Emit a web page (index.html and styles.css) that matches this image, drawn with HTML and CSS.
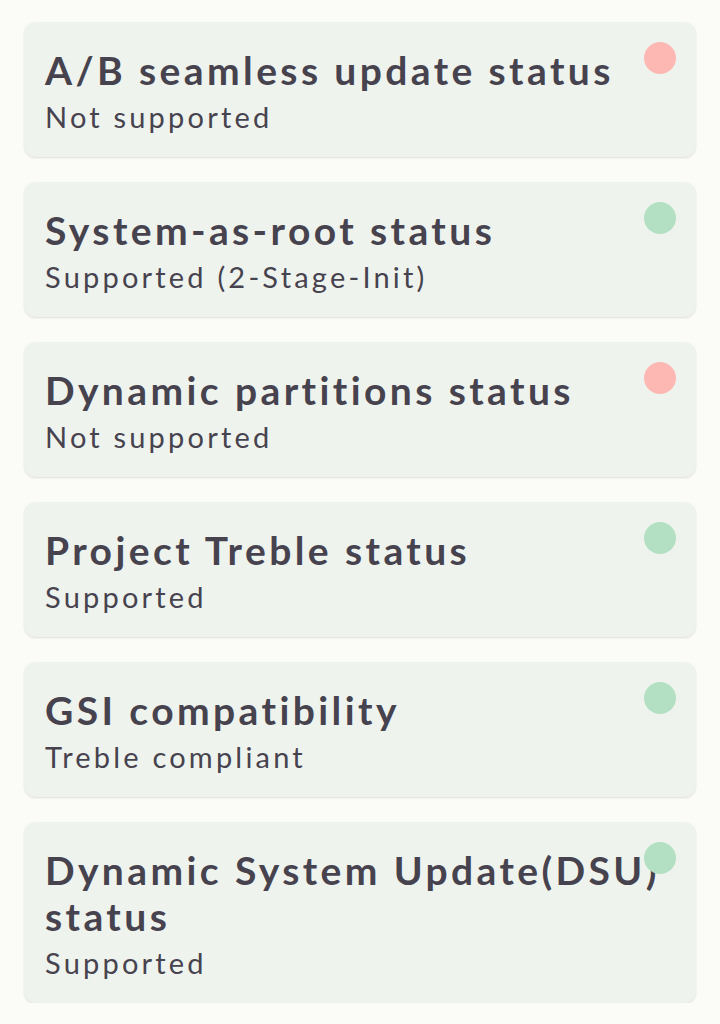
FILE: index.html
```html
<!DOCTYPE html>
<html>
<head>
<meta charset="utf-8">
<link rel="stylesheet" href="styles.css">
</head>
<body>
<main class="list">
  <section class="card">
    <h2 class="title">A/B seamless update status</h2>
    <p class="value">Not supported</p>
    <span class="dot dot-bad"></span>
  </section>
  <section class="card">
    <h2 class="title">System-as-root status</h2>
    <p class="value">Supported (2-Stage-Init)</p>
    <span class="dot dot-good"></span>
  </section>
  <section class="card">
    <h2 class="title">Dynamic partitions status</h2>
    <p class="value">Not supported</p>
    <span class="dot dot-bad"></span>
  </section>
  <section class="card">
    <h2 class="title">Project Treble status</h2>
    <p class="value">Supported</p>
    <span class="dot dot-good"></span>
  </section>
  <section class="card">
    <h2 class="title">GSI compatibility</h2>
    <p class="value">Treble compliant</p>
    <span class="dot dot-good"></span>
  </section>
  <section class="card">
    <h2 class="title">Dynamic System Update(DSU) status</h2>
    <p class="value">Supported</p>
    <span class="dot dot-good"></span>
  </section>
</main>
</body>
</html>
```

FILE: styles.css
```css
html, body {
  margin: 0;
  padding: 0;
  background: #fbfcf7;
}
body {
  font-family: Lato, "Noto Sans", sans-serif;
  color: #47434e;
}
.list {
  display: flex;
  flex-direction: column;
  gap: 25px;
  padding: 22px 24px 0 24px;
}
.card {
  position: relative;
  background: #eff3ee;
  border-radius: 12px;
  padding: 25px 21px 22px 21px;
  box-shadow: 0 1px 2px rgba(0, 0, 0, 0.12);
}
.title {
  margin: 0;
  font-size: 39px;
  line-height: 46px;
  font-weight: 700;
  letter-spacing: 3.4px;
}
.value {
  margin: 6px 0 0 0;
  font-size: 29px;
  line-height: 36px;
  font-weight: 400;
  letter-spacing: 3.2px;
}
.dot {
  position: absolute;
  top: 20px;
  right: 20px;
  width: 32px;
  height: 32px;
  border-radius: 50%;
}
.dot-bad { background: #fdb8b3; }
.dot-good { background: #b3e0c2; }
```
